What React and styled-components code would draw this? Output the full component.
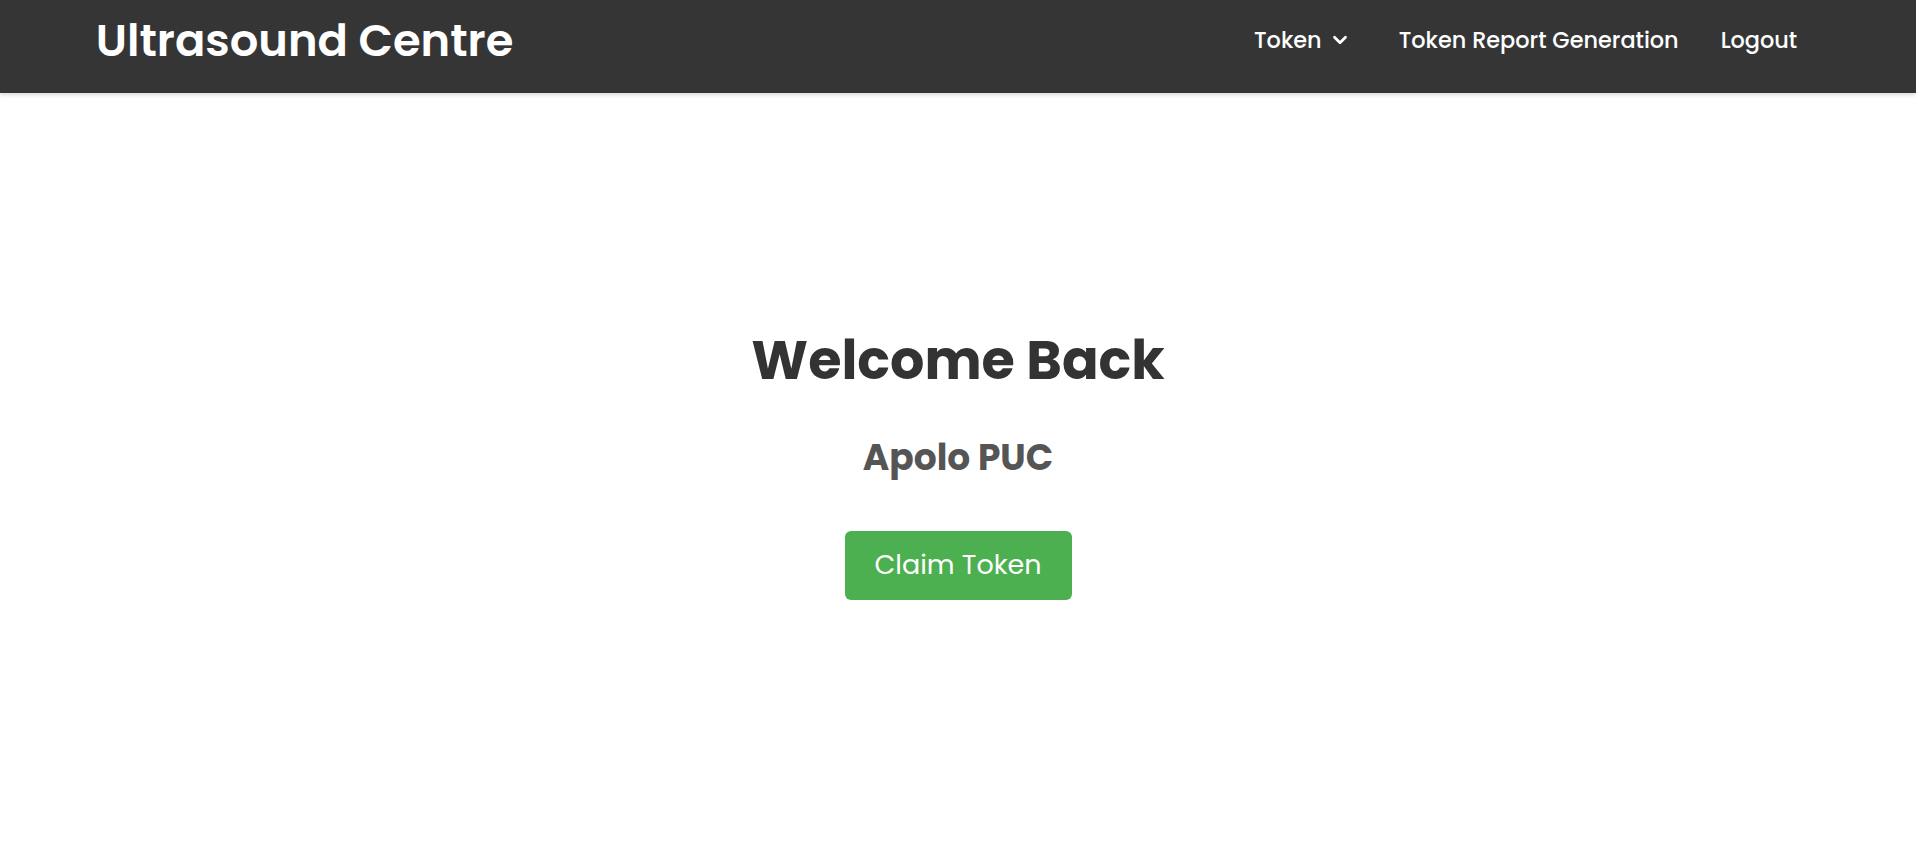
import React from "react"
import styled, { createGlobalStyle } from "styled-components"
import { ChevronDown } from "lucide-react"

const GlobalStyle = createGlobalStyle`
  * {
    box-sizing: border-box;
  }
  body {
    margin: 0;
    font-family: "Poppins", "Open Sans", "Liberation Sans", sans-serif;
    background: #ffffff;
  }
`

const Header = styled.header`
  display: flex;
  align-items: center;
  justify-content: space-between;
  height: 93px;
  padding: 0 calc(5% + 3px) 13px 5%;
  background-color: #353535;
  box-shadow: 0 2px 4px rgba(0, 0, 0, 0.15);
`

const Brand = styled.h1`
  margin: 0;
  color: #ffffff;
  font-size: 44.8px;
  font-weight: 600;
`

const NavList = styled.nav`
  display: flex;
  align-items: center;
  gap: 2px;
`

const NavLink = styled.a`
  display: flex;
  align-items: center;
  gap: 7px;
  padding: 10px 20px;
  margin-right: ${(p) => (p.$dropdown ? "6px" : "0")};
  color: #ffffff;
  font-size: 22.4px;
  font-weight: 500;
  text-decoration: none;
  cursor: pointer;
`

const Main = styled.main`
  display: flex;
  flex-direction: column;
  align-items: center;
  justify-content: center;
  min-height: calc(100vh - 93px);
  padding-bottom: 37px;
  text-align: center;
`

const Heading = styled.h2`
  margin: 0 0 29px 0;
  color: #333333;
  font-size: 54px;
  font-weight: 700;
`

const SubHeading = styled.h3`
  margin: 0 0 46px 0;
  color: #555555;
  font-size: 36px;
  font-weight: 700;
`

const ClaimButton = styled.button`
  width: 227px;
  height: 69px;
  border: none;
  border-radius: 6px;
  background-color: #4caf50;
  color: #ffffff;
  font-family: inherit;
  font-size: 27px;
  cursor: pointer;
`

const App = () => (
  <>
    <GlobalStyle />
    <Header>
      <Brand>Ultrasound Centre</Brand>
      <NavList>
        <NavLink $dropdown>
          Token <ChevronDown size={22} strokeWidth={3} />
        </NavLink>
        <NavLink>Token Report Generation</NavLink>
        <NavLink>Logout</NavLink>
      </NavList>
    </Header>
    <Main>
      <Heading>Welcome Back</Heading>
      <SubHeading>Apolo PUC</SubHeading>
      <ClaimButton>Claim Token</ClaimButton>
    </Main>
  </>
)

export default App
